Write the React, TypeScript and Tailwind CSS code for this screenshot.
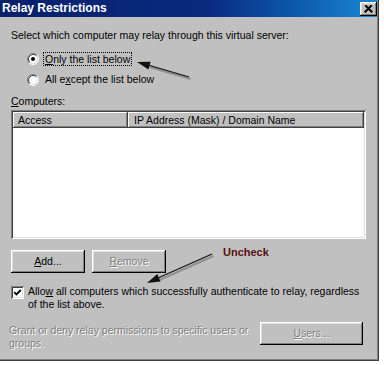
import React from "react";

const raised =
  "shadow-[inset_-1px_-1px_#000,inset_1px_1px_#fff,inset_-2px_-2px_#808080,inset_2px_2px_#dfdfdf]";
const sunken =
  "shadow-[inset_1px_1px_#808080,inset_-1px_-1px_#fff,inset_2px_2px_#404040,inset_-2px_-2px_#dfdfdf]";
const disabledText = "text-[#808080] [text-shadow:1px_1px_0_#fff]";

function Radio({ checked }: { checked?: boolean }) {
  return (
    <svg width="12" height="12" viewBox="0 0 12 12" className="shrink-0">
      <circle cx="6" cy="6" r="4.5" fill="#fff" />
      <path d="M2.11 9.89 A5.5 5.5 0 0 1 9.89 2.11" fill="none" stroke="#808080" strokeWidth="1" />
      <path d="M9.89 2.11 A5.5 5.5 0 0 1 2.11 9.89" fill="none" stroke="#fff" strokeWidth="1" />
      <path d="M2.82 9.18 A4.5 4.5 0 0 1 9.18 2.82" fill="none" stroke="#404040" strokeWidth="1" />
      <path d="M9.18 2.82 A4.5 4.5 0 0 1 2.82 9.18" fill="none" stroke="#dfdfdf" strokeWidth="1" />
      {checked && <circle cx="6" cy="6" r="2" fill="#000" />}
    </svg>
  );
}

export default function App() {
  return (
    <div
      className="relative w-[384px] h-[365px] bg-white overflow-hidden text-[10.5px] leading-[13px] text-black"
      style={{ fontFamily: '"Liberation Sans", Arial, sans-serif' }}
    >
      <div className="w-[379px] h-[361px] bg-[#c0c0c0] shadow-[inset_-1px_-1px_#404040,inset_-2px_-2px_#808080] flex flex-col">
        {/* title bar */}
        <div className="h-[17px] mr-[2px] bg-linear-to-r from-[#07206a] via-[#0a2a80] via-55% to-[#1a86d6] flex items-center justify-between">
          <span className="pl-[2px] text-white font-bold text-[12px] leading-[17px]">Relay Restrictions</span>
          <div className={`w-[17px] h-[14px] bg-[#c0c0c0] ${raised} flex items-center justify-center`}>
            <svg width="9" height="8" viewBox="0 0 9 8">
              <path d="M1 0.5 L8 7.5 M8 0.5 L1 7.5 M2 0.5 L8.5 7 M7 0.5 L0.5 7" stroke="#000" strokeWidth="1.3" fill="none" />
            </svg>
          </div>
        </div>

        {/* body */}
        <div className="flex flex-col pl-[11px]">
          <div className="mt-[12px]">Select which computer may relay through this virtual server:</div>

          <div className="mt-[6px] flex flex-col pl-[16px]">
            <div className="h-[21px] flex items-center">
              <Radio checked />
              <span className="ml-[4px] px-[1px] border border-dotted border-black leading-[12px]">
                <u>O</u>nly the list below
              </span>
            </div>
            <div className="h-[21px] flex items-center">
              <Radio />
              <span className="ml-[5px] px-[1px]">
                All e<u>x</u>cept the list below
              </span>
            </div>
          </div>

          <div className="mt-[5px]">
            <u>C</u>omputers:
          </div>

          {/* list */}
          <div className={`mt-[2px] w-[355px] h-[129px] bg-white ${sunken} p-[2px] flex flex-col`}>
            <div className="h-[16px] flex bg-[#c0c0c0] shrink-0">
              <div className="w-[115px] h-full pl-[5px] flex items-center shadow-[inset_-1px_-1px_#404040,inset_1px_1px_#fff,inset_-2px_-2px_#808080]">
                Access
              </div>
              <div className="flex-1 h-full pl-[6px] flex items-center shadow-[inset_-1px_-1px_#404040,inset_1px_1px_#fff,inset_-2px_-2px_#808080]">
                IP Address (Mask) / Domain Name
              </div>
            </div>
          </div>

          {/* buttons */}
          <div className="mt-[11px] flex">
            <div className={`w-[74px] h-[23px] ${raised} flex items-center justify-center`}>
              <span>
                <u>A</u>dd...
              </span>
            </div>
            <div className={`ml-[7px] w-[74px] h-[23px] ${raised} flex items-center justify-center`}>
              <span className={disabledText}>
                <u>R</u>emove
              </span>
            </div>
          </div>

          {/* checkbox */}
          <div className="mt-[12px] flex items-start">
            <div className={`mt-[1px] w-[13px] h-[13px] bg-white ${sunken} flex items-center justify-center shrink-0`}>
              <svg width="9" height="9" viewBox="0 0 9 9">
                <path d="M1.2 4.2 L3.4 6.4 L7.8 2" stroke="#000" strokeWidth="1.9" fill="none" />
              </svg>
            </div>
            <div className="ml-[4px]">
              Allo<u>w</u> all computers which successfully authenticate to relay, regardless
              <br />
              of the list above.
            </div>
          </div>

          {/* bottom row */}
          <div className="mt-[11px] flex items-start -ml-[2px]">
            <div className={`mt-[2px] w-[251px] ${disabledText}`}>
              Grant or deny relay permissions to specific users or
              <br />
              groups.
            </div>
            <div className={`w-[103px] h-[23px] ${raised} flex items-center justify-center`}>
              <span className={disabledText}>
                <u>U</u>sers...
              </span>
            </div>
          </div>
        </div>
      </div>

      {/* annotation */}
      <div className="absolute left-[223px] top-[246px] font-bold text-[11px] leading-[13px] text-[#5a1010]">
        Uncheck
      </div>

      <svg className="absolute left-0 top-0 pointer-events-none" width="384" height="365" viewBox="0 0 384 365">
        <g opacity="0.25" transform="translate(1.5,2)">
          <line x1="189" y1="77" x2="148" y2="65" stroke="#000" strokeWidth="2" />
          <line x1="212" y1="254" x2="158" y2="278" stroke="#000" strokeWidth="2" />
        </g>
        <line x1="189" y1="77" x2="148" y2="65" stroke="#111" strokeWidth="1.3" />
        <polygon points="137,62 150.6,61.8 148.4,69.4" fill="#111" />
        <line x1="212" y1="254" x2="158" y2="278" stroke="#111" strokeWidth="1.3" />
        <polygon points="147,283 160.5,281.4 157.3,274.1" fill="#111" />
      </svg>
    </div>
  );
}
